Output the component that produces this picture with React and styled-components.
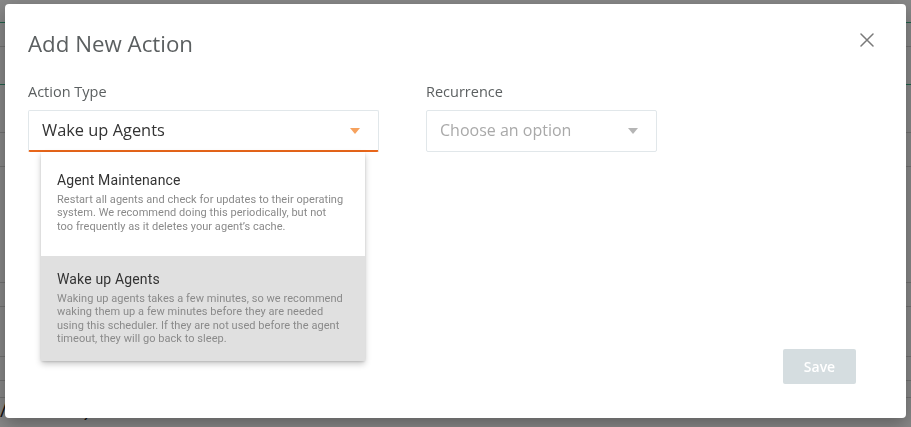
import React from "react";
import styled, { createGlobalStyle } from "styled-components";

const GlobalStyle = createGlobalStyle`
  html, body { margin: 0; padding: 0; }
  body {
    width: 911px;
    height: 427px;
    overflow: hidden;
    background: #fff;
    font-family: "Open Sans", "Lato", sans-serif;
  }
  * { box-sizing: border-box; }
`;

/* ---------- page behind the dialog ---------- */

const Page = styled.div`
  width: 911px;
  height: 427px;
  background: #fff;
  display: flex;
  flex-direction: column;
`;

const PageRow = styled.div`
  height: ${(p) => p.$h}px;
  flex: none;
  border-bottom: 1px solid ${(p) => (p.$accent ? "#3cb48a" : "#d6d6d6")};
  display: flex;
  align-items: flex-start;
  font-family: "Roboto", sans-serif;
  font-size: 20px;
  line-height: 22px;
  color: #222;
`;

const PageCell = styled.span`
  width: ${(p) => p.$w}px;
  flex: none;
  white-space: nowrap;
  overflow: hidden;
`;

/* ---------- overlay + dialog ---------- */

const Overlay = styled.div`
  position: fixed;
  inset: 0;
  background: rgba(0, 0, 0, 0.47);
  padding: 4px 5px 9px 5px;
  display: flex;
`;

const Modal = styled.div`
  width: 901px;
  height: 414px;
  background: #fff;
  border-radius: 4px;
  box-shadow: 0 6px 18px rgba(0, 0, 0, 0.3);
  display: flex;
  flex-direction: column;
  padding: 25px 31px 34px 23px;
`;

const Header = styled.div`
  display: flex;
  align-items: center;
  justify-content: space-between;
`;

const Title = styled.h2`
  margin: 0;
  font-size: 22.3px;
  line-height: 30px;
  font-weight: 400;
  color: #5b5f60;
`;

const CloseButton = styled.button`
  border: 0;
  background: none;
  padding: 0;
  width: 16px;
  height: 16px;
  margin-top: -8px;
  display: flex;
  align-items: center;
  justify-content: center;
  cursor: pointer;
`;

const FormRow = styled.div`
  display: flex;
  gap: 47px;
  margin-top: 23px;
`;

const Field = styled.div`
  width: ${(p) => p.$w}px;
  display: flex;
  flex-direction: column;
  gap: 8px;
  position: relative;
`;

const Label = styled.label`
  font-size: 14.5px;
  line-height: 20px;
  color: #5b5f60;
  font-weight: 400;
`;

const SelectBox = styled.div`
  height: 42px;
  border: 1px solid #e1e7ea;
  border-bottom: ${(p) => (p.$open ? "2px solid #e8661a" : "1px solid #e1e7ea")};
  border-radius: 2px;
  display: flex;
  align-items: center;
  justify-content: space-between;
  padding: 0 18px 2px 13px;
  font-size: ${(p) => (p.$placeholder ? 16 : 16.4)}px;
  color: ${(p) => (p.$placeholder ? "#a9a9a9" : "#333")};
  background: #fff;
`;

const Caret = styled.span`
  width: 0;
  height: 0;
  border-left: 5px solid transparent;
  border-right: 5px solid transparent;
  border-top: 6px solid ${(p) => p.$color};
  margin-top: 2px;
`;

const Menu = styled.ul`
  position: absolute;
  top: 70px;
  left: 13px;
  width: 324px;
  margin: 0;
  padding: 0;
  list-style: none;
  background: #fff;
  border-radius: 2px;
  box-shadow: 0 3px 6px rgba(0, 0, 0, 0.22), 0 1px 2px rgba(0, 0, 0, 0.12);
  z-index: 2;
  font-family: "Roboto", sans-serif;
`;

const MenuItem = styled.li`
  padding: ${(p) => p.$top}px 16px 0 16px;
  height: ${(p) => p.$h}px;
  background: ${(p) => (p.$active ? "#e0e0e0" : "#fff")};
`;

const ItemTitle = styled.div`
  font-size: 14px;
  line-height: 18px;
  color: #333;
  letter-spacing: 0.15px;
`;

const ItemText = styled.p`
  margin: 4px 0 0;
  max-width: 288px;
  font-size: 11px;
  line-height: 13.3px;
  color: #8a8a8a;
  letter-spacing: 0.05px;
`;

const Footer = styled.div`
  margin-top: auto;
  display: flex;
  justify-content: flex-end;
  padding-right: 19px;
`;

const SaveButton = styled.button`
  width: 73px;
  height: 35px;
  border: 0;
  border-radius: 2px;
  background: #d5dde0;
  color: #fff;
  font-family: "Open Sans", sans-serif;
  font-size: 14px;
  font-weight: 600;
  cursor: default;
`;

const rows = [
  { h: 23, accent: true },
  { h: 24 },
  { h: 38, accent: true },
  { h: 48 },
  { h: 34 },
  { h: 116 },
  { h: 24 },
  { h: 50 },
  { h: 24 },
  { h: 17 },
];

const options = [
  {
    title: "Agent Maintenance",
    text:
      "Restart all agents and check for updates to their operating system. We recommend doing this periodically, but not too frequently as it deletes your agent’s cache.",
    h: 104,
    top: 19,
  },
  {
    title: "Wake up Agents",
    text:
      "Waking up agents takes a few minutes, so we recommend waking them up a few minutes before they are needed using this scheduler. If they are not used before the agent timeout, they will go back to sleep.",
    h: 105,
    top: 14,
    active: true,
  },
];

export default function App() {
  return (
    <>
      <GlobalStyle />
      <Page>
        {rows.map((r, i) => (
          <PageRow key={i} $h={r.h} $accent={r.accent} />
        ))}
        <PageRow $h={40}>
          <PageCell $w={470}>/06/2021)</PageCell>
          <PageCell $w={200}>Asia/Jerusalem</PageCell>
        </PageRow>
      </Page>
      <Overlay>
        <Modal>
          <Header>
            <Title>Add New Action</Title>
            <CloseButton aria-label="Close">
              <svg width="14" height="14" viewBox="0 0 14 14">
                <path d="M1 1L13 13M13 1L1 13" stroke="#7a7a7a" strokeWidth="1.5" strokeLinecap="round" />
              </svg>
            </CloseButton>
          </Header>
          <FormRow>
            <Field $w={351}>
              <Label>Action Type</Label>
              <SelectBox $open>
                Wake up Agents
                <Caret $color="#f6a25e" />
              </SelectBox>
              <Menu>
                {options.map((o) => (
                  <MenuItem key={o.title} $h={o.h} $top={o.top} $active={o.active}>
                    <ItemTitle>{o.title}</ItemTitle>
                    <ItemText>{o.text}</ItemText>
                  </MenuItem>
                ))}
              </Menu>
            </Field>
            <Field $w={231}>
              <Label>Recurrence</Label>
              <SelectBox $placeholder>
                Choose an option
                <Caret $color="#b5b5b5" />
              </SelectBox>
            </Field>
          </FormRow>
          <Footer>
            <SaveButton>Save</SaveButton>
          </Footer>
        </Modal>
      </Overlay>
    </>
  );
}
